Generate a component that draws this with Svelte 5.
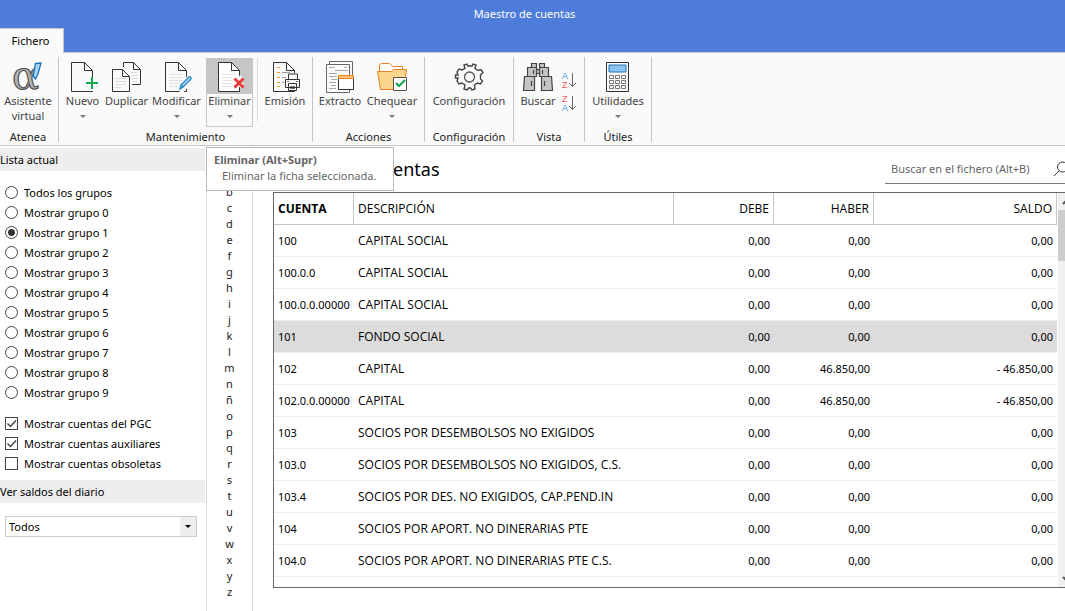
<script>
  let grupo = 1; // Grupo de cuentas seleccionado
  let diario = 'Todos';
  let busqueda = '';
  let seleccionada = '101'; // Fila activa de la tabla

  const grupos = ['Todos los grupos'];
  for (let i = 0; i <= 9; i++) grupos.push('Mostrar grupo ' + i);

  let opciones = [
    { texto: 'Mostrar cuentas del PGC', activa: true },
    { texto: 'Mostrar cuentas auxiliares', activa: true },
    { texto: 'Mostrar cuentas obsoletas', activa: false },
  ];

  const letras = 'abcdefghijklmnñopqrstuvwxyz'.split('');

  const cuentas = [
    { cuenta: '100', descripcion: 'CAPITAL SOCIAL', haber: '0,00', saldo: '0,00' },
    { cuenta: '100.0.0', descripcion: 'CAPITAL SOCIAL', haber: '0,00', saldo: '0,00' },
    { cuenta: '100.0.0.00000', descripcion: 'CAPITAL SOCIAL', haber: '0,00', saldo: '0,00' },
    { cuenta: '101', descripcion: 'FONDO SOCIAL', haber: '0,00', saldo: '0,00' },
    { cuenta: '102', descripcion: 'CAPITAL', haber: '46.850,00', saldo: '- 46.850,00' },
    { cuenta: '102.0.0.00000', descripcion: 'CAPITAL', haber: '46.850,00', saldo: '- 46.850,00' },
    { cuenta: '103', descripcion: 'SOCIOS POR DESEMBOLSOS NO EXIGIDOS', haber: '0,00', saldo: '0,00' },
    { cuenta: '103.0', descripcion: 'SOCIOS POR DESEMBOLSOS NO EXIGIDOS, C.S.', haber: '0,00', saldo: '0,00' },
    { cuenta: '103.4', descripcion: 'SOCIOS POR DES. NO EXIGIDOS, CAP.PEND.IN', haber: '0,00', saldo: '0,00' },
    { cuenta: '104', descripcion: 'SOCIOS POR APORT. NO DINERARIAS PTE', haber: '0,00', saldo: '0,00' },
    { cuenta: '104.0', descripcion: 'SOCIOS POR APORT. NO DINERARIAS PTE C.S.', haber: '0,00', saldo: '0,00' },
  ];
</script>

{#snippet hoja()}
  <path class="papel" d="M4.5 4.5h13l8 8v21h-21z" />
  <path class="papel" d="M17.5 4.5v8h8" />
{/snippet}

{#snippet lineas()}
  <path d="M8 16.5h14M8 19.5h14M8 22.5h14M8 25.5h12M8 28.5h9" stroke="#e2e2e2" />
{/snippet}

<div class="app">
  <header class="titulo">Maestro de cuentas</header>
  <nav class="pestanas"><button class="pestana">Fichero</button></nav>

  <!-- Cinta de opciones -->
  <div class="cinta">
    <section class="grupo atenea">
      <div class="botones">
        <button class="boton">
          <svg width="32" height="36" viewBox="0 0 32 36">
            <text x="0" y="31" font-family="DejaVu Serif, serif" font-size="40" fill="#b3b3b3" stroke="#555" stroke-width="1.2">α</text>
            <path d="M23.5 5.500l5.500-.5-3 11-2.500 5-2.500-3z" fill="#a6d3f5" stroke="#1d72b8" stroke-width="1.3" />
          </svg>
          <span class="texto">Asistente virtual</span>
        </button>
      </div>
      <h2>Atenea</h2>
    </section>

    <section class="grupo mantenimiento">
      <div class="botones">
        <button class="boton">
          <svg width="32" height="36" viewBox="0 0 32 36">
            {@render hoja()}
            <path d="M25 19v14M18 25h14" stroke="#fafafa" stroke-width="5" />
            <path d="M25 19v12M19 25h12" stroke="#12a650" stroke-width="2" />
          </svg>
          <span class="texto">Nuevo</span><i class="flecha"></i>
        </button>
        <button class="boton">
          <svg width="32" height="36" viewBox="0 0 32 36">
            <path class="papel" d="M12.500 4.500h10l7 7v15h-17z" />
            <path class="papel" d="M22.500 4.500v7h7" />
            <path d="M20 14.500h7M20 17.500h7M20 20.500h7M20 23.500h6" stroke="#dcdcdc" />
            <path d="M.5 10.500h12l7 7v17H.5z" fill="#fafafa" stroke="#fafafa" stroke-width="3" />
            <path class="papel" d="M1.500 11.500h10l7 7v15h-17zM11.500 11.500v7h7" />
            <path d="M4 20.500h11M4 23.500h11M4 26.500h11M4 29.500h7" stroke="#dcdcdc" />
          </svg>
          <span class="texto">Duplicar</span>
        </button>
        <button class="boton">
          <svg width="32" height="36" viewBox="0 0 32 36">
            {@render hoja()}
            {@render lineas()}
            <path d="M18 33L31 19" stroke="#fafafa" stroke-width="8" />
            <path d="M19 31l1-4 8-8q2-1 2 2l-8 8zM20 27l3 2" fill="#bfe0f8" stroke="#2489ca" stroke-width="1.400" />
          </svg>
          <span class="texto">Modificar</span><i class="flecha"></i>
        </button>
        <button class="boton activo" aria-describedby="ayuda-eliminar">
          <svg width="32" height="36" viewBox="0 0 32 36">
            <path class="papel blanco" d="M4.500 4.500h13l8 8v21h-21z" />
            <path class="papel" d="M17.500 4.500v8h8" />
            {@render lineas()}
            <path d="M19 19l9 9M28 19l-9 9" stroke="#fff" stroke-width="5" />
            <path d="M20.500 20.500l9 9M29.500 20.500l-9 9" stroke="#ea3c3c" stroke-width="3" />
          </svg>
          <span class="texto">Eliminar</span><i class="flecha"></i>
        </button>
        <button class="boton emision">
          <svg width="32" height="36" viewBox="0 0 32 36">
            {@render hoja()}
            <path d="M8 9.500h3M8 14.500h3M8 19.500h3M8 24.500h3M8 28.500h3" stroke="#f39a1e" />
            <path d="M13 14.500h8M13 19.500h4M13 24.500h3" stroke="#999" />
            <path d="M15 20h3v-5h12v5h3v12H15z" fill="#fafafa" />
            <path class="papel" d="M19.500 21v-5h9v5M16.500 29.500v-8h14v8zM19.500 25.500h8v7h-8z" />
            <path d="M21 28.500h5M21 30.500h5M27 23.500h2" stroke="#777" />
            <path d="M18 23.500h2" stroke="#2489ca" />
          </svg>
          <span class="texto">Emisión</span>
        </button>
      </div>
      <h2>Mantenimiento</h2>
    </section>

    <section class="grupo acciones">
      <div class="botones">
        <button class="boton">
          <svg width="32" height="36" viewBox="0 0 32 36">
            <path d="M5.500 6V3.500h23v28H26" fill="none" stroke="#666" />
            <path d="M2.500 6.500h23v28h-23z" fill="#fafafa" stroke="#666" />
            <path d="M5 9.500h6M5 15.500h8M5 18.500h8M7 21.500h6M5 24.500h7M7 27.500h5M5 30.500h7M20 9.500h3" stroke="#aaa" />
            <path d="M11 12.500h13" stroke="#aaa" />
            <path d="M14.500 18.500h15v13h-15z" fill="#fff" stroke="#333" />
            <path d="M14.500 17.500h15v3h-15z" fill="#fbc673" stroke="#e98125" />
          </svg>
          <span class="texto">Extracto</span>
        </button>
        <button class="boton">
          <svg width="32" height="36" viewBox="0 0 32 36">
            <path d="M3.500 14V6.500l2-1h8l3 3h10v6" fill="#fff" stroke="#e98125" />
            <path d="M1.500 13.500h14l2-2h13l-3 20h-23z" fill="#fad58b" stroke="#e98125" />
            <path d="M17.500 19.500h13v13h-13z" fill="#fff" stroke="#555" />
            <path d="M20 25l3 3 6-6" fill="none" stroke="#12a650" stroke-width="2" />
          </svg>
          <span class="texto">Chequear</span><i class="flecha"></i>
        </button>
      </div>
      <h2>Acciones</h2>
    </section>

    <section class="grupo configuracion">
      <div class="botones">
        <button class="boton">
          <svg width="32" height="36" viewBox="0 0 32 36">
            <path d="M12 10.500L11 7l3-1 1 2h4l1-2 3 1-1 3.500 3 2 3-1 2 3-2.500 2.500v4L29.500 23l-2 3-3-1-3 2 .5 4-3 1-1.500-2h-2L14 32l-3-1 1-4-3-2-3 1-2-3 1-3H2.500v-3H5l-1-3 2-3 3 1z" fill="#fafafa" stroke="#444" stroke-width="1.400" />
            <circle cx="16.500" cy="19" r="5" fill="none" stroke="#555" stroke-width="1.300" />
          </svg>
          <span class="texto">Configuración</span>
        </button>
      </div>
      <h2>Configuración</h2>
    </section>

    <section class="grupo vista">
      <div class="botones">
        <button class="boton">
          <svg width="32" height="36" viewBox="0 0 32 36">
            <g fill="#c4c4c4" stroke="#444" stroke-width="1.200">
              <path d="M9.500 5.500h5v4h-5zM17.500 5.500h5v4h-5zM5.500 9.500h9v9h-9zM17.500 9.500h9v9h-9zM14.500 11.500h3v4h-3z" />
              <path d="M2.500 18.500h10v14h-11zM19.500 18.500h10l1 14h-11z" />
              <path d="M11.500 12v4M20.500 12v4M9.500 23v5M22.500 23v5" />
            </g>
          </svg>
          <span class="texto">Buscar</span>
        </button>
        <div class="orden">
          <button aria-label="Orden ascendente">
            <svg width="16" height="18" viewBox="0 0 16 18">
              <text x="0" y="7" fill="#3999d6">A</text>
              <text x="0" y="16" fill="#f05a5a">Z</text>
              <path d="M10.500 1v13M7 11l3.500 3.500L14 11" fill="none" stroke="#666" />
            </svg>
          </button>
          <button aria-label="Orden descendente">
            <svg width="16" height="18" viewBox="0 0 16 18">
              <text x="0" y="7" fill="#f05a5a">Z</text>
              <text x="0" y="16" fill="#3999d6">A</text>
              <path d="M10.500 1v13M7 11l3.500 3.500L14 11" fill="none" stroke="#666" />
            </svg>
          </button>
        </div>
      </div>
      <h2>Vista</h2>
    </section>

    <section class="grupo utiles">
      <div class="botones">
        <button class="boton">
          <svg width="32" height="36" viewBox="0 0 32 36">
            <path class="papel" d="M4.500 4.500h22v29h-22z" />
            <path d="M7 7h17v7H7z" fill="#8cc4ef" stroke="#2074b5" />
            <path d="M7.500 17.500h4v3h-4zM13.500 17.500h4v3h-4zM19.500 17.500h4v3h-4zM7.500 22.500h4v3h-4zM13.500 22.500h4v3h-4zM19.500 22.500h4v3h-4zM7.500 27.500h4v3h-4zM13.500 27.500h4v3h-4zM19.500 27.500h4v3h-4z" fill="#fff" stroke="#777" />
          </svg>
          <span class="texto">Utilidades</span><i class="flecha"></i>
        </button>
      </div>
      <h2>Útiles</h2>
    </section>

    <div class="ayuda" id="ayuda-eliminar" role="tooltip">
      <strong>Eliminar (Alt+Supr)</strong>
      <p>Eliminar la ficha seleccionada.</p>
    </div>
  </div>

  <div class="cuerpo">
    <aside class="lateral">
      <h3>Lista actual</h3>
      <div class="lista">
        {#each grupos as nombre, i}
          <label><input type="radio" name="grupo" value={i - 1} bind:group={grupo} />{nombre}</label>
        {/each}
      </div>
      <div class="lista casillas">
        {#each opciones as opcion}
          <label>
            <span class="casilla">
              <input type="checkbox" bind:checked={opcion.activa} />
              {#if opcion.activa}
                <svg width="13" height="13" viewBox="0 0 13 13"><path d="M2.500 6.500l3 3 5.500-6" fill="none" stroke="#444" stroke-width="1.500" /></svg>
              {/if}
            </span>{opcion.texto}
          </label>
        {/each}
      </div>
      <h3><label for="diario">Ver saldos del diario</label></h3>
      <div class="desplegable">
        <select id="diario" bind:value={diario}>
          <option>Todos</option>
        </select>
        <span class="tirador"><i></i></span>
      </div>
    </aside>

    <nav class="letras">
      {#each letras as letra}
        <button>{letra}</button>
      {/each}
    </nav>

    <main>
      <div class="contenido">
        <div class="cabecera">
          <h1>Maestro de cuentas</h1>
          <label class="buscador">
            <input type="text" placeholder="Buscar en el fichero (Alt+B)" aria-label="Buscar en el fichero" bind:value={busqueda} />
            <svg width="16" height="16" viewBox="0 0 16 16"><circle cx="9.500" cy="6" r="5" fill="none" stroke="#333" /><path d="M6 10l-5 5" stroke="#333" /></svg>
          </label>
        </div>

        <div class="marco">
          <div class="rejilla">
            <table>
              <thead>
                <tr>
                  <th class="cuenta">CUENTA</th>
                  <th class="descripcion">DESCRIPCIÓN</th>
                  <th class="importe">DEBE</th>
                  <th class="importe">HABER</th>
                  <th class="saldo">SALDO</th>
                </tr>
              </thead>
              <tbody>
                {#each cuentas as fila}
                  <tr class:elegida={fila.cuenta === seleccionada} on:click={() => (seleccionada = fila.cuenta)}>
                    <td>{fila.cuenta}</td>
                    <td class="nombre">{fila.descripcion}</td>
                    <td class="num">0,00</td>
                    <td class="num">{fila.haber}</td>
                    <td class="num">{fila.saldo}</td>
                  </tr>
                {/each}
              </tbody>
            </table>
          </div>
          <div class="barra">
            <button aria-label="Subir"><svg width="9" height="6" viewBox="0 0 9 6"><path d="M1 5l3.500-3.500L8 5" /></svg></button>
            <div class="pulgar"></div>
            <button aria-label="Bajar"><svg width="9" height="6" viewBox="0 0 9 6"><path d="M1 1l3.500 3.500L8 1" /></svg></button>
          </div>
        </div>
      </div>
    </main>
  </div>
</div>

<style>
  :global(body) {
    background: #fff;
  }

  * {
    box-sizing: border-box;
  }

  .app {
    display: flex;
    flex-direction: column;
    height: 100vh;
    overflow: hidden;
    font-family: 'Noto Sans', 'Open Sans', sans-serif;
    font-size: 11px;
    color: #000;
  }

  button, input, select {
    font: inherit;
    color: inherit;
  }

  button {
    padding: 0;
    border: none;
    background: none;
  }

  h1, h2, h3, p {
    margin: 0;
    font-weight: normal;
  }

  /* Título y pestañas */
  .titulo {
    height: 28px;
    line-height: 28px;
    padding-right: 16px;
    text-align: center;
    color: #fff;
    background: #4d7cdb;
  }

  .pestanas {
    height: 24px;
    background: #4d7cdb;
  }

  .pestana {
    position: relative;
    z-index: 1;
    width: 64px;
    height: 25px;
    padding: 0 2px 2px 0;
    border: 1px solid #c6c6c6;
    border-width: 1px 1px 0 0;
    background: #fafafa;
  }

  /* Cinta */
  .cinta {
    position: relative;
    display: flex;
    flex: none;
    height: 94px;
    padding: 4px 0 3px;
    border-top: 1px solid #c6c6c6;
    border-bottom: 1px solid #c6c6c6;
    background: #fafafa;
  }

  .grupo {
    display: flex;
    flex-direction: column;
    justify-content: space-between;
    border-right: 1px solid #c6c6c6;
  }

  .grupo h2 {
    height: 14px;
    line-height: 18px;
    font-size: 11px;
    text-align: center;
    color: #222;
  }

  .atenea { width: 59px; padding-right: 2px; }
  .mantenimiento { width: 254px; }
  .acciones { width: 112px; }
  .configuracion { width: 89px; }
  .vista { width: 71px; }
  .utiles { width: 67px; }

  .botones {
    display: flex;
    height: 70px;
    padding-top: 1px;
  }

  .boton {
    display: flex;
    flex-direction: column;
    align-items: center;
    flex: 1;
    min-width: 0;
    border: 1px solid transparent;
    border-top: none;
    color: #444;
  }

  .boton svg {
    flex: none;
    overflow: visible;
  }

  .boton .texto {
    margin-top: -1px;
    line-height: 15px;
  }

  .mantenimiento .boton { flex: 0 0 47px; }
  .mantenimiento .boton:nth-child(2) { flex-basis: 41px; }
  .mantenimiento .boton:nth-child(3) { flex-basis: 59px; }
  .mantenimiento .boton.emision { flex-basis: 56px; }
  .acciones .boton { flex: 0 0 54px; }
  .acciones .boton:last-child { flex-basis: 50px; }
  .vista .boton { flex: 0 0 48px; }

  .boton.activo {
    border-color: #c6c6c6;
    background: linear-gradient(#c6c6c6 36px, #fafafa 36px);
  }

  .boton.emision {
    height: 64px;
    border-left: 1px solid #dedede;
    margin-left: 4px;
  }

  .flecha, .tirador i {
    margin-top: 7px;
    border: 3px solid transparent;
    border-top-color: #777;
    border-bottom: none;
  }

  .papel {
    fill: none;
    stroke: #333;
  }

  .blanco {
    fill: #fff;
  }

  .orden {
    display: flex;
    flex-direction: column;
    gap: 5px;
    padding-top: 14px;
  }

  .orden button {
    height: 18px;
  }

  .orden svg {
    display: block;
    overflow: visible;
    font-family: 'Liberation Sans', sans-serif;
    font-size: 9px;
  }

  /* Ayuda emergente sobre la lista */
  .ayuda {
    position: absolute;
    left: 206px;
    top: 94px;
    z-index: 2;
    width: 188px;
    height: 44px;
    padding: 4px 7px;
    border: 1px solid #b9b9b9;
    background: #fff;
    color: #666;
    line-height: 16px;
    white-space: nowrap;
  }

  .ayuda p {
    padding-left: 8px;
  }

  .cuerpo {
    display: flex;
    flex: 1;
    min-height: 0;
  }

  /* Panel lateral */
  .lateral {
    flex: 0 0 205px;
    padding-top: 2px;
  }

  .lateral h3 {
    height: 23px;
    line-height: 23px;
    font-size: 11px;
    background: #eee;
  }

  .lista {
    display: flex;
    flex-direction: column;
    padding: 11px 5px 0;
  }

  .lista label {
    display: flex;
    align-items: center;
    gap: 6px;
    height: 20px;
  }

  .casillas {
    padding: 11px 5px 7px;
  }

  .lista input {
    display: block;
    appearance: none;
    width: 13px;
    height: 13px;
    margin: 0;
    border: 1px solid #444;
    background: #fff;
  }

  .lista input[type='radio'] {
    border-radius: 50%;
  }

  .lista input[type='radio']:checked {
    background: radial-gradient(circle, #333 3px, #fff 4px);
  }

  .casilla {
    position: relative;
  }

  .casilla svg {
    position: absolute;
    left: 0;
    top: 0;
    pointer-events: none;
  }

  .desplegable {
    display: flex;
    height: 21px;
    margin: 13px 8px 0 5px;
    border: 1px solid #ccc;
  }

  .desplegable select {
    appearance: none;
    flex: 1;
    padding: 0 3px;
    border: none;
    background: #fff;
  }

  .tirador {
    display: flex;
    align-items: center;
    justify-content: center;
    width: 16px;
    background: #eee;
    pointer-events: none;
  }

  .tirador i {
    margin: 0;
    border-top-color: #000;
  }

  /* Índice alfabético */
  .letras {
    display: flex;
    flex-direction: column;
    flex: 0 0 47px;
    margin-left: 1px;
    padding-top: 22px;
    border: 1px solid #dadada;
    border-width: 0 1px;
  }

  .letras button {
    flex: none;
    height: 16px;
    line-height: 16px;
    color: #222;
  }

  /* Contenido principal */
  main {
    flex: 1;
    min-width: 0;
    overflow: hidden;
  }

  .contenido {
    display: flex;
    flex-direction: column;
    height: 100%;
    margin-right: -10px;
    padding: 0 0 23px 20px;
  }

  .cabecera {
    display: flex;
    justify-content: space-between;
    height: 46px;
    padding: 8px 0;
  }

  h1 {
    font-size: 18px;
    line-height: 30px;
  }

  .buscador {
    display: flex;
    align-items: center;
    justify-content: space-between;
    width: 190px;
    padding: 0 6px;
    border-bottom: 1px solid #777;
  }

  .buscador input {
    width: 150px;
    padding: 0;
    border: none;
    outline: none;
  }

  .buscador input::placeholder {
    color: #666;
  }

  .marco {
    display: flex;
    flex: 1;
    min-height: 0;
    border: 1px solid #666;
  }

  .rejilla {
    flex: 1;
    overflow: hidden;
  }

  table {
    width: 100%;
    table-layout: fixed;
    border-collapse: separate;
    border-spacing: 0;
  }

  th, td {
    height: 32px;
    padding: 0 4px;
    text-align: left;
    font-weight: normal;
    white-space: nowrap;
    border-bottom: 1px solid #eee;
  }

  th {
    border-right: 1px solid #c6c6c6;
    border-bottom-color: #c6c6c6;
  }

  td.num {
    text-align: right;
  }

  th, .nombre {
    font-family: 'Open Sans', sans-serif;
    font-size: 12px;
  }

  .cuenta {
    width: 80px;
    font-weight: bold;
  }

  .descripcion { width: 320px; }
  .importe { width: 100px; text-align: right; }
  .saldo { text-align: right; }

  .elegida td {
    background: #dcdcdc;
  }

  .barra {
    display: flex;
    flex-direction: column;
    flex: 0 0 16px;
    margin-left: 1px;
    background: #f0f0f0;
  }

  .barra button {
    height: 17px;
    line-height: 0;
  }

  .barra path {
    fill: none;
    stroke: #555;
    stroke-width: 2;
  }

  .pulgar {
    height: 51px;
    margin-bottom: auto;
    background: #cdcdcd;
  }
</style>
